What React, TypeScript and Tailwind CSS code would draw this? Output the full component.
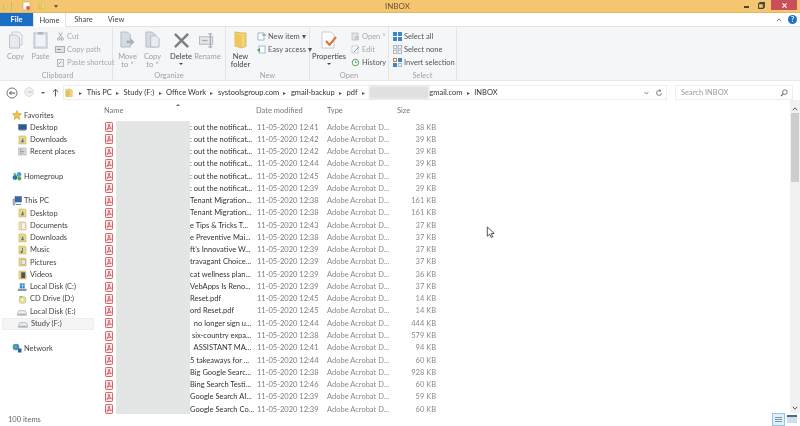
import React from "react";

const Folder = ({ c = "w-[9px] h-[10px]" }: { c?: string }) => (
  <svg viewBox="0 0 10 11" className={c + " shrink-0"}>
    <path d="M1 1 L6 0.5 L9 2 V10 H1 Z" fill="#f1d77e" stroke="#c9a84f" strokeWidth=".6" />
    <path d="M1 3 L6 2 V10.5 L1 10 Z" fill="#e6c25c" />
  </svg>
);
const FolderBlue = () => (
  <svg viewBox="0 0 10 11" className="w-[9px] h-[10px] shrink-0">
    <path d="M1 1 L8 1 L9 3 V10 H1 Z" fill="#eed581" stroke="#c9a84f" strokeWidth=".5" />
    <path d="M3 8 L5 5 L7 8 Z M4.5 4 h1.5 v2 h-1.5 Z" fill="#2c7fc4" />
  </svg>
);
const Docs = () => (
  <svg viewBox="0 0 10 11" className="w-[9px] h-[10px] shrink-0">
    <path d="M1 1 L8 1 L9 3 V10 H1 Z" fill="#eedfa8" stroke="#cbb878" strokeWidth=".5" />
    <rect x="4" y="2" width="4" height="7" fill="#f5f5f5" stroke="#aaa" strokeWidth=".4" />
  </svg>
);
const Pdf = () => (
  <svg viewBox="0 0 8 10" className="w-[8px] h-[10px] shrink-0">
    <rect x=".5" y=".5" width="7" height="9" rx=".8" fill="#fbe3e3" stroke="#d0565c" strokeWidth=".9" />
    <path d="M4 2 L3.6 5 L1.8 7.6 L4 6.2 L6.4 6.4 L4.4 4.6 Z" fill="none" stroke="#cc3a42" strokeWidth=".7" />
  </svg>
);
const Star = () => (
  <svg viewBox="0 0 10 10" className="w-[10px] h-[10px] shrink-0">
    <path d="M5 .5 L6.3 3.5 L9.5 3.8 L7 6 L7.8 9.5 L5 7.6 L2.2 9.5 L3 6 L.5 3.8 L3.7 3.5 Z" fill="#f4c23f" stroke="#b98d1e" strokeWidth=".5" />
  </svg>
);
const Monitor = () => (
  <svg viewBox="0 0 10 9" width={9} height={9} className="shrink-0">
    <rect x=".5" y="1" width="9" height="6" fill="#2a5a9c" stroke="#5b6b80" strokeWidth=".5" />
    <rect x="1.5" y="7.5" width="7" height="1" fill="#9aa5b2" />
  </svg>
);
const Recent = () => (
  <svg viewBox="0 0 10 10" className="w-[9px] h-[9px] shrink-0">
    <rect x=".5" y="1" width="8.5" height="8" fill="#d6d6d6" stroke="#a8a8a8" strokeWidth=".5" />
    <path d="M2 3h3M2 5h5M2 7h4" stroke="#8c8c8c" strokeWidth=".8" />
  </svg>
);
const Home = () => (
  <svg viewBox="0 0 10 10" className="w-[10px] h-[10px] shrink-0">
    <circle cx="3" cy="6.5" r="2.4" fill="#2d6fb5" />
    <circle cx="7" cy="3.5" r="2.4" fill="#4aa0d8" />
    <circle cx="7.4" cy="7.4" r="2" fill="#5ea63c" />
    <circle cx="2.8" cy="3" r="1.3" fill="#7cbb4a" />
  </svg>
);
const Pc = () => (
  <svg viewBox="0 0 10 10" className="w-[10px] h-[10px] shrink-0">
    <rect x="3" y=".5" width="6.5" height="5.5" fill="#2e6cb4" stroke="#556" strokeWidth=".5" />
    <path d="M1 3 V9 H3 V3 Z" fill="#b9c0c9" stroke="#667" strokeWidth=".4" />
    <path d="M4 8.5 H9" stroke="#7b8794" strokeWidth="1" />
  </svg>
);
const Music = () => (
  <svg viewBox="0 0 10 11" className="w-[9px] h-[10px] shrink-0">
    <path d="M1 1 L8 1 L9 3 V10 H1 Z" fill="#eed581" stroke="#c9a84f" strokeWidth=".5" />
    <path d="M5 3 V7.5" stroke="#2b6fb2" strokeWidth=".9" />
    <circle cx="4" cy="7.8" r="1.2" fill="#2b6fb2" />
  </svg>
);
const Pics = () => (
  <svg viewBox="0 0 10 11" className="w-[9px] h-[10px] shrink-0">
    <path d="M1 1 L8 1 L9 3 V10 H1 Z" fill="#eed581" stroke="#c9a84f" strokeWidth=".5" />
    <rect x="3.5" y="3" width="4.5" height="5" fill="#dde7ef" stroke="#889" strokeWidth=".4" />
  </svg>
);
const Vid = () => (
  <svg viewBox="0 0 10 11" className="w-[9px] h-[10px] shrink-0">
    <path d="M1 1 L8 1 L9 3 V10 H1 Z" fill="#eed581" stroke="#c9a84f" strokeWidth=".5" />
    <rect x="3.5" y="2.5" width="4.5" height="6.5" fill="#4a5560" />
  </svg>
);
const DiskC = () => (
  <svg viewBox="0 0 11 10" className="w-[10px] h-[10px] shrink-0 -ml-px">
    <rect x="1" y="7" width="9.5" height="2.5" rx=".6" fill="#8b97a3" />
    <rect x="3" y="1" width="2.5" height="2.5" fill="#2b84cc" />
    <rect x="6" y="1" width="2.5" height="2.5" fill="#2b84cc" />
    <rect x="3" y="4" width="2.5" height="2.5" fill="#2b84cc" />
    <rect x="6" y="4" width="2.5" height="2.5" fill="#2b84cc" />
  </svg>
);
const Cd = () => (
  <svg viewBox="0 0 10 10" className="w-[9px] h-[9px] shrink-0">
    <circle cx="5" cy="5.5" r="4" fill="#e7e29a" stroke="#a7a77a" strokeWidth=".5" />
    <circle cx="5" cy="5.5" r="1" fill="#fff" />
    <path d="M1 2 L4 1 V3 Z" fill="#5fb04a" />
  </svg>
);
const Disk = () => (
  <svg viewBox="0 0 11 6" className="w-[10px] h-[6px] shrink-0 mt-[3px] -ml-px">
    <path d="M2 .5 H9 L10.5 3.5 V5.5 H.5 V3.5 Z" fill="#eef0f2" stroke="#8a9098" strokeWidth=".6" />
    <rect x="1.5" y="3.8" width="8" height="1.2" fill="#9ea6ae" />
  </svg>
);
const Net = () => (
  <svg viewBox="0 0 10 10" className="w-[10px] h-[10px] shrink-0">
    <circle cx="4" cy="4" r="3.3" fill="#3d8fd0" />
    <path d="M2 3 L4 2 L5 4 L3 6 Z" fill="#6ab04c" />
    <rect x="6" y="5.5" width="3.5" height="4" fill="#2f5f94" />
  </svg>
);

const nav: [React.ReactNode, string, boolean][] = [
  [<Star />, "Favorites", false],
  [<Monitor />, "Desktop", true],
  [<FolderBlue />, "Downloads", true],
  [<Recent />, "Recent places", true],
  [null, "", false],
  [<Home />, "Homegroup", false],
  [null, "", false],
  [<Pc />, "This PC", false],
  [<FolderBlue />, "Desktop", true],
  [<Docs />, "Documents", true],
  [<FolderBlue />, "Downloads", true],
  [<Music />, "Music", true],
  [<Pics />, "Pictures", true],
  [<Vid />, "Videos", true],
  [<DiskC />, "Local Disk (C:)", true],
  [<Cd />, "CD Drive (D:)", true],
  [<Disk />, "Local Disk (E:)", true],
  [<Disk />, "Study (F:)", true],
  [null, "", false],
  [<Net />, "Network", false],
];

const files: [string, string, string][] = [
  [": out the notificat...", "12:41", "38 KB"],
  [": out the notificat...", "12:42", "39 KB"],
  [": out the notificat...", "12:42", "39 KB"],
  [": out the notificat...", "12:44", "39 KB"],
  [": out the notificat...", "12:45", "39 KB"],
  [": out the notificat...", "12:39", "39 KB"],
  ["Tenant Migration...", "12:38", "161 KB"],
  ["Tenant Migration...", "12:38", "161 KB"],
  ["e Tips & Tricks T...", "12:43", "37 KB"],
  ["e Preventive Mai...", "12:38", "37 KB"],
  ["ft's Innovative W...", "12:39", "37 KB"],
  ["travagant Choice...", "12:39", "37 KB"],
  ["cat wellness plan...", "12:39", "36 KB"],
  ["VebApps Is Reno...", "12:39", "37 KB"],
  ["Reset.pdf", "12:45", "14 KB"],
  ["ord Reset.pdf", "12:45", "14 KB"],
  ["  no longer sign u...", "12:44", "444 KB"],
  [" six-country expa...", "12:38", "579 KB"],
  ["  ASSISTANT MA...", "12:41", "94 KB"],
  ["5 takeaways for ...", "12:44", "60 KB"],
  ["Big Google Searc...", "12:38", "928 KB"],
  ["Bing Search Testi...", "12:46", "60 KB"],
  ["Google Search AI...", "12:39", "59 KB"],
  ["Google Search Co...", "12:39", "60 KB"],
];

const Big = ({ children, label, w, dark, sub, caret }: { children: React.ReactNode; label: string; w: string; dark?: boolean; sub?: string; caret?: boolean }) => (
  <div className={`flex flex-col items-center ${w} shrink-0 leading-[8px] ${dark ? "text-[#444]" : "text-[#a0a0a0]"}`}>
    <div className="h-[20px] flex items-center justify-center">{children}</div>
    <div className="mt-[3px] whitespace-nowrap">{label}</div>
    {sub && <div className="whitespace-nowrap">{sub}</div>}
    {caret && <div className="mt-[2px] w-0 h-0 border-x-[2px] border-x-transparent border-t-[2px] border-t-[#444]" />}
  </div>
);

const Small = ({ icon, text, dark }: { icon: React.ReactNode; text: string; dark?: boolean }) => (
  <div className={`flex items-center gap-[2px] h-[13px] whitespace-nowrap ${dark ? "text-[#555]" : "text-[#a8a8a8]"}`}>
    <span className="w-[10px] flex justify-center shrink-0">{icon}</span>
    {text}
  </div>
);

const Group = ({ label, w, children }: { label: string; w: string; children: React.ReactNode }) => (
  <div className={`${w} shrink-0 h-full flex flex-col border-r border-[#e3e4e6]`}>
    <div className="h-[44px] flex pt-[3px]">{children}</div>
    <div className="text-center text-[#a2a2a2] leading-[9px]">{label}</div>
  </div>
);

const DocIcon = () => (
  <svg viewBox="0 0 16 18" width={18} height={18}>
    <path d="M4 1 H11 L14 4 V14 H4 Z" fill="#f1f3f6" stroke="#c4cad2" />
    <path d="M1.5 4 H8.5 L11.5 7 V17 H1.5 Z" fill="#e6eaef" stroke="#bcc3cc" />
  </svg>
);

const Sep = () => <span className="text-[#555] text-[6px] mx-[4.4px] leading-none">▸</span>;

export default function App() {
  return (
    <div className="relative w-[800px] h-[426px] overflow-hidden bg-white flex flex-col blur-[0.4px] text-[7.5px] text-[#555] font-['Lato','Open_Sans',sans-serif]">
      {/* title bar */}
      <div className="relative h-[13px] shrink-0 bg-[#f3c66f] border-b border-[#e2b663] flex items-center">
        <div className="flex items-center pl-[2px] gap-[3px]">
          <Folder c="w-[6px] h-[9px]" />
          <span className="w-px h-[9px] bg-[#e0b060]" />
          <span className="w-[4px]" />
          <svg viewBox="0 0 9 10" width="9" height="10" className="shrink-0"><rect x="1" y="1" width="7" height="8" fill="#fff" stroke="#c7a15a" strokeWidth=".6" /><circle cx="6" cy="7" r="2" fill="#d8603f" /></svg>
          <span className="w-[1px]" />
          <Folder c="w-[7px] h-[10px]" />
          <span className="w-[3px]" />
          <span className="w-0 h-0 border-x-[2px] border-x-transparent border-t-[3px] border-t-[#555]" />
        </div>
        <div className="absolute left-[385px] top-[0px] text-[8px] text-[#66553a] leading-[12px]">INBOX</div>
        <div className="ml-auto flex items-start h-full pr-[3px]">
          <span className="w-[5px] h-[2px] bg-[#444] mt-[6px] mr-[9px]" />
          <svg viewBox="0 0 8 8" width="7" height="7" className="mt-[2px] mr-[6px]"><path d="M2 2 V.7 H7.3 V6 H6 M.7 2 H6 V7.3 H.7 Z" fill="none" stroke="#444" strokeWidth="1.2" /></svg>
          <div className="w-[26px] h-[10px] bg-[#c9505a] flex items-center justify-center">
            <svg viewBox="0 0 6 6" width="5" height="5"><path d="M.5 .5 L5.5 5.5 M5.5 .5 L.5 5.5" stroke="#fff" strokeWidth="1.3" /></svg>
          </div>
        </div>
      </div>
      {/* tabs */}
      <div className="h-[14px] shrink-0 flex items-center bg-white border-b border-[#e3e3e3] text-[#444]">
        <div className="w-[33px] h-full bg-[#1a6fc4] text-white font-bold flex items-center justify-center">File</div>
        <div className="w-[33px] h-[15px] bg-white border-x border-[#e3e3e3] flex items-center justify-center self-start">Home</div>
        <div className="w-[35px] text-center">Share</div>
        <div className="w-[30px] text-center">View</div>
        <div className="ml-auto flex items-center gap-[6px] pr-[3px]">
          <svg viewBox="0 0 7 5" width="6" height="4"><path d="M.8 4 L3.5 1 L6.2 4" fill="none" stroke="#777" strokeWidth="1.2" /></svg>
          <span className="w-[9px] h-[9px] rounded-full bg-[#1b72c0] text-white text-[7px] font-bold flex items-center justify-center leading-none">?</span>
        </div>
      </div>
      {/* ribbon */}
      <div className="h-[54px] shrink-0 bg-[#f5f6f8] border-b border-[#e8e8e8] flex pl-[3px]">
        <Group label="Clipboard" w="w-[110px]">
          <Big label="Copy" w="w-[25px]"><DocIcon /></Big>
          <Big label="Paste" w="w-[25px]">
            <svg viewBox="0 0 15 18" width="15" height="18"><rect x="1" y="2" width="13" height="15" fill="#dde3ea" stroke="#b4bcc6" /><rect x="3" y="4" width="9" height="11" fill="#f0f3f6" /><rect x="5" y="1" width="5" height="2.5" fill="#aeb6bf" /></svg>
          </Big>
          <div className="flex flex-col pl-[2px]">
            <Small icon={<svg viewBox="0 0 8 10" width="7" height="9"><path d="M2 .5 L5.5 6 M6 .5 L2.5 6" stroke="#9aa2aa" strokeWidth="1" /><circle cx="2" cy="7.8" r="1.4" fill="none" stroke="#9aa2aa" /><circle cx="6" cy="7.8" r="1.4" fill="none" stroke="#9aa2aa" /></svg>} text="Cut" />
            <Small icon={<svg viewBox="0 0 10 7" width="10" height="7"><rect x=".5" y=".5" width="9" height="6" fill="#dfe3e7" stroke="#a9b0b8" /><path d="M2 3.5 H6" stroke="#8b939b" /></svg>} text="Copy path" />
            <Small icon={<svg viewBox="0 0 8 9" width="7" height="8"><rect x=".5" y=".5" width="7" height="8" fill="#eef1f4" stroke="#a9b0b8" /><path d="M2 6 L5 3" stroke="#7f8890" /></svg>} text="Paste shortcut" />
          </div>
        </Group>
        <Group label="Organize" w="w-[113px]">
          <Big label="Move" sub="to ˅" w="w-[25px] ml-[2px]">
            <svg viewBox="0 0 16 19" width="15" height="18"><path d="M1 1 H8 L11 4 V17 H1 Z" fill="#d5dbe2" stroke="#b3bbc5" /><path d="M7 10 H11 V7 L15.5 11.5 L11 16 V13 H7 Z" fill="#aab3bd" /></svg>
          </Big>
          <Big label="Copy" sub="to ˅" w="w-[25px]">
            <svg viewBox="0 0 16 19" width="15" height="18"><path d="M1 1 H8 L11 4 V17 H1 Z" fill="#d5dbe2" stroke="#b3bbc5" /><path d="M6 5 H12 L15 8 V17 H6 Z" fill="#e8ebef" stroke="#b3bbc5" /></svg>
          </Big>
          <Big label="Delete" w="w-[32px]" dark caret>
            <svg viewBox="0 0 18 18" width="17" height="17"><path d="M2 2 L16 16 M16 2 L2 16" stroke="#7c8086" strokeWidth="2.6" /></svg>
          </Big>
          <Big label="Rename" w="w-[21px]">
            <svg viewBox="0 0 18 16" width="17" height="15"><rect x=".5" y="4" width="14" height="8" fill="#e3e7ec" stroke="#b1b8c0" /><path d="M3 8 H9" stroke="#a5adb5" strokeWidth="1.4" /><path d="M12 1 V15 M10 1 H14 M10 15 H14" stroke="#8f969e" /></svg>
          </Big>
        </Group>
        <Group label="New" w="w-[84px]">
          <Big label="New" sub="folder" w="w-[29px]" dark>
            <svg viewBox="0 0 13 18" width="13" height="18"><path d="M1 1 L8 2 L12 2 V15 L8 17 L1 15 Z" fill="#f2d675" stroke="#c8a549" strokeWidth=".7" /><path d="M1 3 L7.5 4 V17 L1 15 Z" fill="#edc75a" /></svg>
          </Big>
          <div className="flex flex-col pl-[1px]">
            <Small dark icon={<svg viewBox="0 0 9 9" width="9" height="9"><rect x="1" y="1" width="6" height="7" fill="#fff" stroke="#7da0bf" strokeWidth=".7" /><path d="M5 3 H9" stroke="#57a043" /></svg>} text="New item ▾" />
            <Small dark icon={<svg viewBox="0 0 9 9" width="9" height="9"><rect x="2" y="1" width="6" height="7" fill="#fff" stroke="#7da0bf" strokeWidth=".7" /><path d="M0 5 L3 3 V7 Z" fill="#4f9a45" /></svg>} text="Easy access ▾" />
          </div>
        </Group>
        <Group label="Open" w="w-[79px]">
          <Big label="Properties" w="w-[36px] ml-[1px]" dark caret>
            <svg viewBox="0 0 16 18" width="16" height="18"><path d="M1 1 H10 L13 4 V17 H1 Z" fill="#fff" stroke="#c7ccd3" /><path d="M5 10 L8.5 14 L15 6" fill="none" stroke="#d9733b" strokeWidth="2" /></svg>
          </Big>
          <div className="flex flex-col pl-[3px]">
            <Small icon={<svg viewBox="0 0 9 9" width="9" height="9"><rect x="1" y="1" width="6" height="7" fill="#e3e6ea" stroke="#aab1b8" strokeWidth=".6" /><path d="M4 4 H8 V8 H4 Z" fill="#c3cad1" /></svg>} text="Open ˅" />
            <Small icon={<svg viewBox="0 0 9 9" width="9" height="9"><rect x="1" y="1" width="6" height="7" fill="#fff" stroke="#aab1b8" strokeWidth=".6" /><path d="M3 7 L8 2" stroke="#6b9ac2" /></svg>} text="Edit" />
            <Small dark icon={<svg viewBox="0 0 10 10" width="10" height="9"><circle cx="5.5" cy="5" r="3.6" fill="#fff" stroke="#5aa04a" strokeWidth="1.1" /><path d="M5.5 3 V5.2 H7.5" stroke="#2f6fa8" strokeWidth=".8" fill="none" /></svg>} text="History" />
          </div>
        </Group>
        <Group label="Select" w="w-[68px]">
          <div className="flex flex-col pl-[3px]">
            <Small dark icon={<svg viewBox="0 0 9 9" width="9" height="9"><rect width="9" height="9" fill="#3b86c8" /><path d="M4.5 0 V9 M0 4.5 H9" stroke="#fff" /></svg>} text="Select all" />
            <Small dark icon={<svg viewBox="0 0 9 9" width="9" height="9"><rect x=".5" y=".5" width="3.3" height="3.3" fill="none" stroke="#aeb5bc" /><rect x="5.2" y=".5" width="3.3" height="3.3" fill="none" stroke="#aeb5bc" /><rect x=".5" y="5.2" width="3.3" height="3.3" fill="none" stroke="#aeb5bc" /><rect x="5.2" y="5.2" width="3.3" height="3.3" fill="none" stroke="#aeb5bc" /></svg>} text="Select none" />
            <Small dark icon={<svg viewBox="0 0 9 9" width="9" height="9"><rect x="5" y="0" width="4" height="4" fill="#3b86c8" /><rect x="0" y="5" width="4" height="4" fill="#3b86c8" /><rect x=".5" y=".5" width="3" height="3" fill="none" stroke="#d27a48" /><rect x="5.5" y="5.5" width="3" height="3" fill="none" stroke="#aeb5bc" /></svg>} text="Invert selection" />
          </div>
        </Group>
      </div>
      {/* address row */}
      <div className="h-[15px] shrink-0 mt-[4px] flex items-center text-[#333] text-[7.5px]">
        <div className="w-[63px] shrink-0 flex items-center pl-[6px]">
          <svg viewBox="0 0 12 12" width="12" height="12"><circle cx="6" cy="6" r="5" fill="#fff" stroke="#666" strokeWidth=".9" /><path d="M9 6 H3.5 M5.5 4 L3.5 6 L5.5 8" fill="none" stroke="#555" strokeWidth="1" /></svg>
          <svg viewBox="0 0 12 12" width="11" height="11" className="ml-[6px]"><circle cx="5.5" cy="5.5" r="4.8" fill="#f3f3f3" stroke="#cfcfcf" strokeWidth=".8" /><path d="M3 5.5 H8 M6.2 3.7 L8 5.5 L6.2 7.3" fill="none" stroke="#c5c5c5" strokeWidth=".9" /></svg>
          <span className="ml-[6px] w-0 h-0 border-x-[2px] border-x-transparent border-t-[2px] border-t-[#555]" />
          <svg viewBox="0 0 8 10" width="7" height="9" className="ml-[7px]"><path d="M4 9.5 V1.5 M1 4.5 L4 1.2 L7 4.5" fill="none" stroke="#555" strokeWidth="1.1" /></svg>
        </div>
        <div className="w-[604px] h-full shrink-0 flex items-center border border-[#eeeeee]">
          <span className="pl-[1px] pr-[2px]"><Folder c="w-[8px] h-[10px]" /></span>
          <Sep />
          <span>This PC</span><Sep />
          <span>Study (F:)</span><Sep />
          <span>Office Work</span><Sep />
          <span>systoolsgroup.com</span><Sep />
          <span>gmail-backup</span><Sep />
          <span>pdf</span><Sep />
          <span className="w-[60px] h-[13px] bg-[#e0e0e0] blur-[1px]" />
          <span>gmail.com</span><Sep />
          <span>INBOX</span>
          <div className="ml-auto flex items-center gap-[6px] pr-[3px]">
            <svg viewBox="0 0 7 5" width="5" height="4"><path d="M.8 1 L3.5 4 L6.2 1" fill="none" stroke="#666" strokeWidth="1.1" /></svg>
            <svg viewBox="0 0 10 10" width="8" height="8"><path d="M8 5 A3 3 0 1 1 5 2 H7 M5.5 .5 L7.5 2 L5.5 3.5" fill="none" stroke="#666" strokeWidth="1" /></svg>
          </div>
        </div>
        <div className="ml-[8px] w-[118px] h-full shrink-0 flex items-center justify-between border border-[#eeeeee] pl-[5px] pr-[4px] text-[#9a9a9a]">
          <span>Search INBOX</span>
          <svg viewBox="0 0 9 9" width="8" height="8"><circle cx="5.5" cy="3.5" r="2.6" fill="none" stroke="#666" strokeWidth="1" /><path d="M3.5 5.5 L1 8" stroke="#666" strokeWidth="1.4" /></svg>
        </div>
      </div>
      {/* main */}
      <div className="flex-1 flex min-h-0 relative">
        <nav className="w-[94px] shrink-0 pt-[9px] pl-[2px] text-[#444]">
          {nav.map(([icon, label, sub], i) => (
            <div key={i} className={`h-[12.28px] flex items-center whitespace-nowrap ${sub ? "pl-[16px] gap-[3px]" : "pl-[10px] gap-[2px]"} ${label === "Study (F:)" ? "bg-[#f4f5f6] border border-[#eeeeee]" : ""}`}>
              {icon}
              <span>{label}</span>
            </div>
          ))}
        </nav>
        <div className="w-[8px] shrink-0" />
        <section className="flex-1 min-w-0 relative">
          <div className="h-[21px] flex items-center pl-[2px] text-[#777] pt-[1px]">
            <span className="w-[152px]">Name</span>
            <span className="w-[71px]">Date modified</span>
            <span className="w-[70px]">Type</span>
            <span>Size</span>
          </div>
          <span className="absolute left-[74px] top-[4px] w-0 h-0 border-x-[2px] border-x-transparent border-b-[2px] border-b-[#666]" />
          {files.map(([name, time, size], i) => (
            <div key={i} className="h-[12.28px] flex items-center pl-[3px] whitespace-nowrap">
              <Pdf />
              <span className="w-[77px] shrink-0" />
              <span className="w-[67px] shrink-0 overflow-hidden whitespace-pre text-[#333]">{name}</span>
              <span className="w-[70px] shrink-0 text-[#7c7c7c]">11-05-2020 {time}</span>
              <span className="w-[60px] shrink-0 text-[#8a8a8a]">Adobe Acrobat D...</span>
              <span className="w-[49px] shrink-0 text-right text-[#8a8a8a]">{size}</span>
            </div>
          ))}
          {/* redaction block */}
          <div className="absolute left-[14px] top-[21px] w-[74px] h-[293px] bg-[#e4e5e5]" />
          {/* mouse cursor */}
          <svg viewBox="0 0 10 14" width="10" height="13" className="absolute left-[384px] top-[126px]">
            <path d="M1 1 V11 L3.5 8.8 L5.5 12.5 L7 11.7 L5.2 8.3 L8.5 8 Z" fill="#fff" stroke="#333" strokeWidth=".9" />
          </svg>
        </section>
        {/* scrollbar */}
        <div className="w-[10px] shrink-0 h-[313px] bg-[#f1f1f1] flex flex-col items-center">
          <svg viewBox="0 0 7 5" width="6" height="4" className="mt-[7px]"><path d="M.8 4 L3.5 1 L6.2 4" fill="none" stroke="#555" strokeWidth="1.2" /></svg>
          <div className="mt-[2px] w-[8px] h-[69px] bg-[#cdcdcd]" />
          <svg viewBox="0 0 7 5" width="6" height="4" className="mt-auto mb-[3px]"><path d="M.8 1 L3.5 4 L6.2 1" fill="none" stroke="#555" strokeWidth="1.2" /></svg>
        </div>
      </div>
      {/* status */}
      <div className="h-[13px] shrink-0 flex items-center pl-[8px] pr-[3px] text-[#666] relative">
        <span>100 items</span>
        <div className="ml-auto flex items-center gap-[2px] -mt-[1px]">
          <div className="w-[13px] h-[13px] bg-[#dff0fb] border border-[#8fc7e8] flex flex-col justify-center gap-[1px] px-[2px]">
            <span className="h-px bg-[#7f96ad]" /><span className="h-px bg-[#7f96ad]" /><span className="h-px bg-[#7f96ad]" />
          </div>
          <div className="w-[10px] h-[8px] bg-[#cfe0ea] border-t-2 border-[#4f6b80]" />
        </div>
      </div>
    </div>
  );
}
